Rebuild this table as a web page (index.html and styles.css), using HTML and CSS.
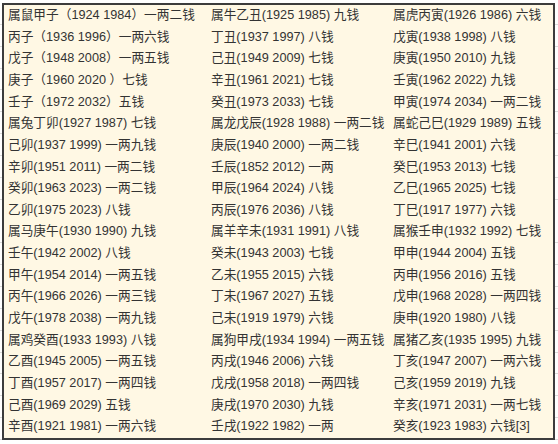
FILE: index.html
```
<!DOCTYPE html>
<html lang="zh-CN">
<head>
<meta charset="utf-8">
<link rel="stylesheet" href="styles.css">
</head>
<body>
<div class="sheet">
  <div class="box">
    <div class="cell">属鼠甲子（1924 1984）一两二钱</div><div class="cell">属牛乙丑(1925 1985) 九钱</div><div class="cell">属虎丙寅(1926 1986) 六钱</div>
    <div class="cell">丙子（1936 1996）一两六钱</div><div class="cell">丁丑(1937 1997) 八钱</div><div class="cell">戊寅(1938 1998) 八钱</div>
    <div class="cell">戊子（1948 2008）一两五钱</div><div class="cell">己丑(1949 2009) 七钱</div><div class="cell">庚寅(1950 2010) 九钱</div>
    <div class="cell">庚子（1960 2020 ）七钱</div><div class="cell">辛丑(1961 2021) 七钱</div><div class="cell">壬寅(1962 2022) 九钱</div>
    <div class="cell">壬子（1972 2032）五钱</div><div class="cell">癸丑(1973 2033) 七钱</div><div class="cell">甲寅(1974 2034) 一两二钱</div>
    <div class="cell">属兔丁卯(1927 1987) 七钱</div><div class="cell">属龙戊辰(1928 1988) 一两二钱</div><div class="cell">属蛇己巳(1929 1989) 五钱</div>
    <div class="cell">己卯(1937 1999) 一两九钱</div><div class="cell">庚辰(1940 2000) 一两二钱</div><div class="cell">辛巳(1941 2001) 六钱</div>
    <div class="cell">辛卯(1951 2011) 一两二钱</div><div class="cell">壬辰(1852 2012) 一两</div><div class="cell">癸巳(1953 2013) 七钱</div>
    <div class="cell">癸卯(1963 2023) 一两二钱</div><div class="cell">甲辰(1964 2024) 八钱</div><div class="cell">乙巳(1965 2025) 七钱</div>
    <div class="cell">乙卯(1975 2023) 八钱</div><div class="cell">丙辰(1976 2036) 八钱</div><div class="cell">丁巳(1917 1977) 六钱</div>
    <div class="cell">属马庚午(1930 1990) 九钱</div><div class="cell">属羊辛未(1931 1991) 八钱</div><div class="cell">属猴壬申(1932 1992) 七钱</div>
    <div class="cell">壬午(1942 2002) 八钱</div><div class="cell">癸未(1943 2003) 七钱</div><div class="cell">甲申(1944 2004) 五钱</div>
    <div class="cell">甲午(1954 2014) 一两五钱</div><div class="cell">乙未(1955 2015) 六钱</div><div class="cell">丙申(1956 2016) 五钱</div>
    <div class="cell">丙午(1966 2026) 一两三钱</div><div class="cell">丁未(1967 2027) 五钱</div><div class="cell">戊申(1968 2028) 一两四钱</div>
    <div class="cell">戊午(1978 2038) 一两九钱</div><div class="cell">己未(1919 1979) 六钱</div><div class="cell">庚申(1920 1980) 八钱</div>
    <div class="cell">属鸡癸酉(1933 1993) 八钱</div><div class="cell">属狗甲戌(1934 1994) 一两五钱</div><div class="cell">属猪乙亥(1935 1995) 九钱</div>
    <div class="cell">乙酉(1945 2005) 一两五钱</div><div class="cell">丙戌(1946 2006) 六钱</div><div class="cell">丁亥(1947 2007) 一两六钱</div>
    <div class="cell">丁酉(1957 2017) 一两四钱</div><div class="cell">戊戌(1958 2018) 一两四钱</div><div class="cell">己亥(1959 2019) 九钱</div>
    <div class="cell">己酉(1969 2029) 五钱</div><div class="cell">庚戌(1970 2030) 九钱</div><div class="cell">辛亥(1971 2031) 一两七钱</div>
    <div class="cell">辛酉(1921 1981) 一两六钱</div><div class="cell">壬戌(1922 1982) 一两</div><div class="cell">癸亥(1923 1983) 六钱[3]</div>
  </div>
</div>
</body>
</html>
```
FILE: styles.css
```
html, body {
  margin: 0;
  padding: 0;
  background: #ffffff;
}

.sheet {
  width: 558px;
  height: 444px;
  padding: 3px 0 0 2px;
  box-sizing: border-box;
  background-image:
    repeating-linear-gradient(to bottom, transparent 0, transparent 20.85px, #dcdcdc 20.85px, #dcdcdc 21.85px);
  background-position: 0 3px;
}

.box {
  width: 553px;
  height: 437px;
  box-sizing: border-box;
  border: 2px solid #3c3c3c;
  background: #fff8e4;
  display: grid;
  grid-template-columns: 203px 182px 1fr;
  grid-template-rows: repeat(20, 1fr);
  font-family: "Liberation Sans", "Noto Sans CJK SC", sans-serif;
  font-size: 12.7px;
  color: #333333;
}

.cell {
  padding-left: 4px;
  padding-bottom: 1px;
  white-space: nowrap;
  display: flex;
  align-items: center;
  line-height: 1;
}
```
